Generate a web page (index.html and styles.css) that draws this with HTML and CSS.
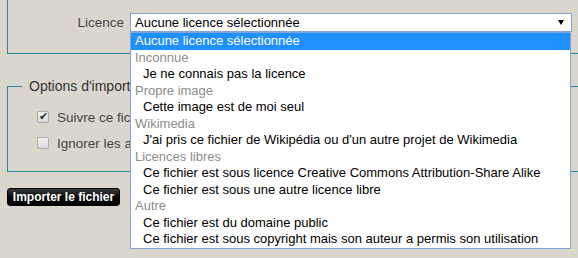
FILE: index.html
```html
<!DOCTYPE html>
<html lang="fr">
<head>
  <meta charset="UTF-8" />
  <meta name="viewport" content="width=device-width, initial-scale=1.0" />
  <title>Importer un fichier</title>
  <link rel="stylesheet" href="styles.css">
</head>
<body>
  <div class="page">
    <fieldset class="group group-licence">
      <div class="field-row">
        <label class="field-label" for="licence">Licence</label>
        <div class="select-wrap">
          <div class="select-box" id="licence">
            <span>Aucune licence sélectionnée</span>
            <span class="arrow"></span>
          </div>
          <!-- open dropdown list -->
          <ul class="select-list">
            <li class="opt selected">Aucune licence sélectionnée</li>
            <li class="opt-group">Inconnue</li>
            <li class="opt">Je ne connais pas la licence</li>
            <li class="opt-group">Propre image</li>
            <li class="opt">Cette image est de moi seul</li>
            <li class="opt-group">Wikimedia</li>
            <li class="opt">J'ai pris ce fichier de Wikipédia ou d'un autre projet de Wikimedia</li>
            <li class="opt-group">Licences libres</li>
            <li class="opt">Ce fichier est sous licence Creative Commons Attribution-Share Alike</li>
            <li class="opt">Ce fichier est sous une autre licence libre</li>
            <li class="opt-group">Autre</li>
            <li class="opt">Ce fichier est du domaine public</li>
            <li class="opt">Ce fichier est sous copyright mais son auteur a permis son utilisation</li>
          </ul>
        </div>
      </div>
    </fieldset>

    <fieldset class="group group-options">
      <legend>Options d'importation</legend>
      <label class="check-row">
        <input type="checkbox" checked />
        <span>Suivre ce fichier</span>
      </label>
      <label class="check-row">
        <input type="checkbox" />
        <span>Ignorer les avertissements</span>
      </label>
    </fieldset>

    <button type="button" class="upload-btn">Importer le fichier</button>
  </div>
</body>
</html>
```

FILE: styles.css
```css
html, body {
  margin: 0;
  height: 100%;
}
body {
  background: #dad6cd;
  font-family: 'Liberation Sans', Arial, sans-serif;
  font-size: 13px;
  color: #333;
  overflow: hidden;
}
.page {
  width: 600px;
}
.group {
  border: 1px solid #268b99;
  margin: 0 0 0 7px;
  min-inline-size: 0;
}
.group-licence {
  margin-top: -10px;
  padding: 22px 0 21px 0;
}
.field-row {
  display: flex;
  align-items: center;
  gap: 6px;
}
.field-label {
  width: 116px;
  text-align: right;
  color: #444;
  font-size: 13.5px;
}
.select-wrap {
  position: relative;
  width: 442px;
}
.select-box {
  box-sizing: border-box;
  height: 19px;
  border: 1px solid #86a3d6;
  background: #fff;
  color: #000;
  padding-left: 4px;
  display: flex;
  align-items: center;
  justify-content: space-between;
}
.arrow {
  width: 0;
  height: 0;
  border-left: 3px solid transparent;
  border-right: 3px solid transparent;
  border-top: 5px solid #000;
  margin-right: 7px;
}
.select-list {
  position: absolute;
  top: 19px;
  left: 0;
  width: 441px;
  box-sizing: border-box;
  margin: 0;
  padding: 0;
  list-style: none;
  background: #fff;
  border: 1px solid #86a3d6;
  z-index: 10;
}
.select-list li {
  height: 16.5px;
  line-height: 16.5px;
  white-space: nowrap;
}
.opt {
  color: #000;
  padding-left: 12px;
}
.opt.selected {
  background: #1e90ff;
  color: #fff;
  padding-left: 4px;
}
.opt-group {
  color: #8c8c8c;
  padding-left: 4px;
}
.group-options {
  margin-top: 24px;
  padding: 15px 0 20px 29px;
}
.group-options legend {
  margin-left: -15px;
  padding: 0 6px 0 7px;
  line-height: 16px;
  font-size: 14px;
  color: #333;
}
.check-row {
  display: flex;
  align-items: center;
  gap: 8px;
  height: 16px;
  font-size: 13.5px;
  color: #444;
}
.check-row + .check-row {
  margin-top: 10px;
}
.check-row input {
  appearance: none;
  -webkit-appearance: none;
  margin: 0;
  width: 12px;
  height: 12px;
  border: 1px solid #a9a9a9;
  border-radius: 2px;
  background: linear-gradient(#f2f2f2, #d8d8d8);
  position: relative;
}
.check-row input:checked::after {
  content: '\2714';
  position: absolute;
  left: 1px;
  top: -2px;
  font-size: 11px;
  color: #333;
}
.upload-btn {
  display: block;
  margin: 16px 0 0 7px;
  width: 113px;
  height: 18px;
  padding: 0;
  border: 1px solid #000;
  border-radius: 3px;
  background: linear-gradient(#3a3a3a, #000 60%);
  color: #fff;
  font-family: 'Liberation Sans', Arial, sans-serif;
  font-size: 12px;
  font-weight: bold;
  line-height: 16px;
  cursor: pointer;
}
```
